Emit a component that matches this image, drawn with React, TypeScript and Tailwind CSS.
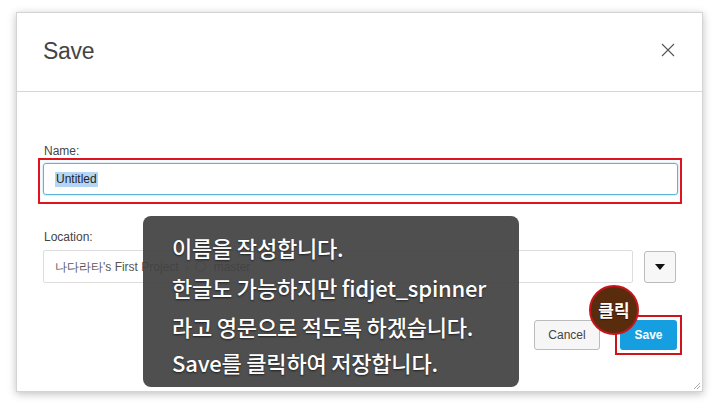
import React from "react";

export default function App() {
  const sans = { fontFamily: '"Liberation Sans", Arial, sans-serif' };
  return (
    <div className="w-[720px] h-[411px] bg-white relative overflow-hidden" style={sans}>
      <div className="pt-[12px] pl-[16px]">
        <div className="relative w-[687px] h-[380px] bg-white border border-[#d4d4d4] shadow-[0_2px_8px_rgba(0,0,0,0.25)] flex flex-col">
          {/* Header */}
          <div className="h-[79px] border-b border-[#d6d6d6] flex items-center justify-between pl-[26px] pr-[24px] shrink-0">
            <div className="text-[23px] text-[#444] tracking-[-0.3px] mt-[-2px]">Save</div>
            <svg width="16" height="16" viewBox="0 0 16 16" className="mt-[-4px] mr-[2px]">
              <path d="M2 2 L14 14 M14 2 L2 14" stroke="#555" strokeWidth="1.1" fill="none" />
            </svg>
          </div>
          {/* Body */}
          <div className="pl-[21px] pr-[21px] pt-[52px] flex flex-col">
            <div className="text-[12px] leading-[14px] text-[#444] pl-[6px]">Name:</div>
            <div className="border-2 border-[#e0141e] pt-[3px] pb-[7px] pl-[3px] pr-[2px] mr-[-1px]">
              <div className="h-[32px] border border-[#5bb5d9] rounded-[3px] flex items-center pl-[11px] shadow-[0_0_2px_rgba(60,160,210,0.6)]">
                <span className="text-[12px] text-[#222] bg-[#b5d5f5] leading-[15px] px-[1px]">Untitled</span>
              </div>
            </div>
            <div className="text-[12px] leading-[14px] text-[#444] pl-[6px] mt-[26px]">Location:</div>
            <div className="flex items-center mt-[6px] pl-[5px] pr-[5px]">
              <div className="flex-1 h-[33px] border border-[#ddd] rounded-[2px] flex items-center pl-[11px] text-[12px] text-[#555]">
                <span>나다라타's First Project</span>
                <span className="ml-[6px] text-[#888]">›</span>
                <span className="ml-[6px] inline-block w-[11px] h-[11px] rounded-full border border-[#888]"></span>
                <span className="ml-[8px]">master</span>
              </div>
              <div className="ml-[11px] w-[32px] h-[32px] border border-[#bbb] rounded-[3px] bg-[#f7f7f7] flex items-center justify-center">
                <svg width="10" height="6" viewBox="0 0 10 6"><path d="M0 0 L10 0 L5 6 Z" fill="#111" /></svg>
              </div>
            </div>
            <div className="flex justify-end items-center mt-[32px] pr-[0px]">
              <div className="w-[66px] h-[30px] border border-[#bbb] rounded-[3px] bg-[#f6f6f6] flex items-center justify-center text-[12px] text-[#444]">Cancel</div>
              <div className="ml-[15px] border-2 border-[#d0121b] p-[3px] mr-[-1px]">
                <div className="w-[57px] h-[30px] rounded-[3px] bg-[#159fe0] flex items-center justify-center text-[12px] font-bold text-white">Save</div>
              </div>
            </div>
          </div>
          {/* resize handle */}
          <svg className="absolute right-[1px] bottom-[1px]" width="9" height="9" viewBox="0 0 9 9">
            <path d="M8 2 L2 8 M8 5 L5 8" stroke="#aaa" strokeWidth="1" />
          </svg>
        </div>
      </div>

      {/* Tooltip overlay */}
      <div
        className="absolute left-[143px] top-[216px] w-[376px] h-[171px] rounded-[8px] bg-[rgba(66,66,66,0.93)] pl-[29px] pt-[11px] text-white text-[22px] font-medium tracking-[-0.2px] [text-shadow:0_1px_2px_rgba(0,0,0,0.6)]"
        style={{ fontFamily: '"Noto Sans CJK KR", "Noto Sans", sans-serif' }}
      >
        <div className="h-[40px] leading-[40px]">이름을 작성합니다.</div>
        <div className="h-[41px] leading-[41px]">한글도 가능하지만 fidjet_spinner</div>
        <div className="h-[37px] leading-[37px]">라고 영문으로 적도록 하겠습니다.</div>
        <div className="h-[34px] leading-[34px]">Save를 클릭하여 저장합니다.</div>
      </div>

      {/* Click badge */}
      <div
        className="absolute left-[589px] top-[285px] w-[50px] h-[50px] rounded-full bg-[#5a2c0e] border-2 border-[#c8141c] flex items-center justify-center text-white text-[17px] font-bold [text-shadow:0_1px_1px_rgba(0,0,0,0.5)]"
        style={{ fontFamily: '"Noto Sans CJK KR", sans-serif' }}
      >
        클릭
      </div>
    </div>
  );
}
